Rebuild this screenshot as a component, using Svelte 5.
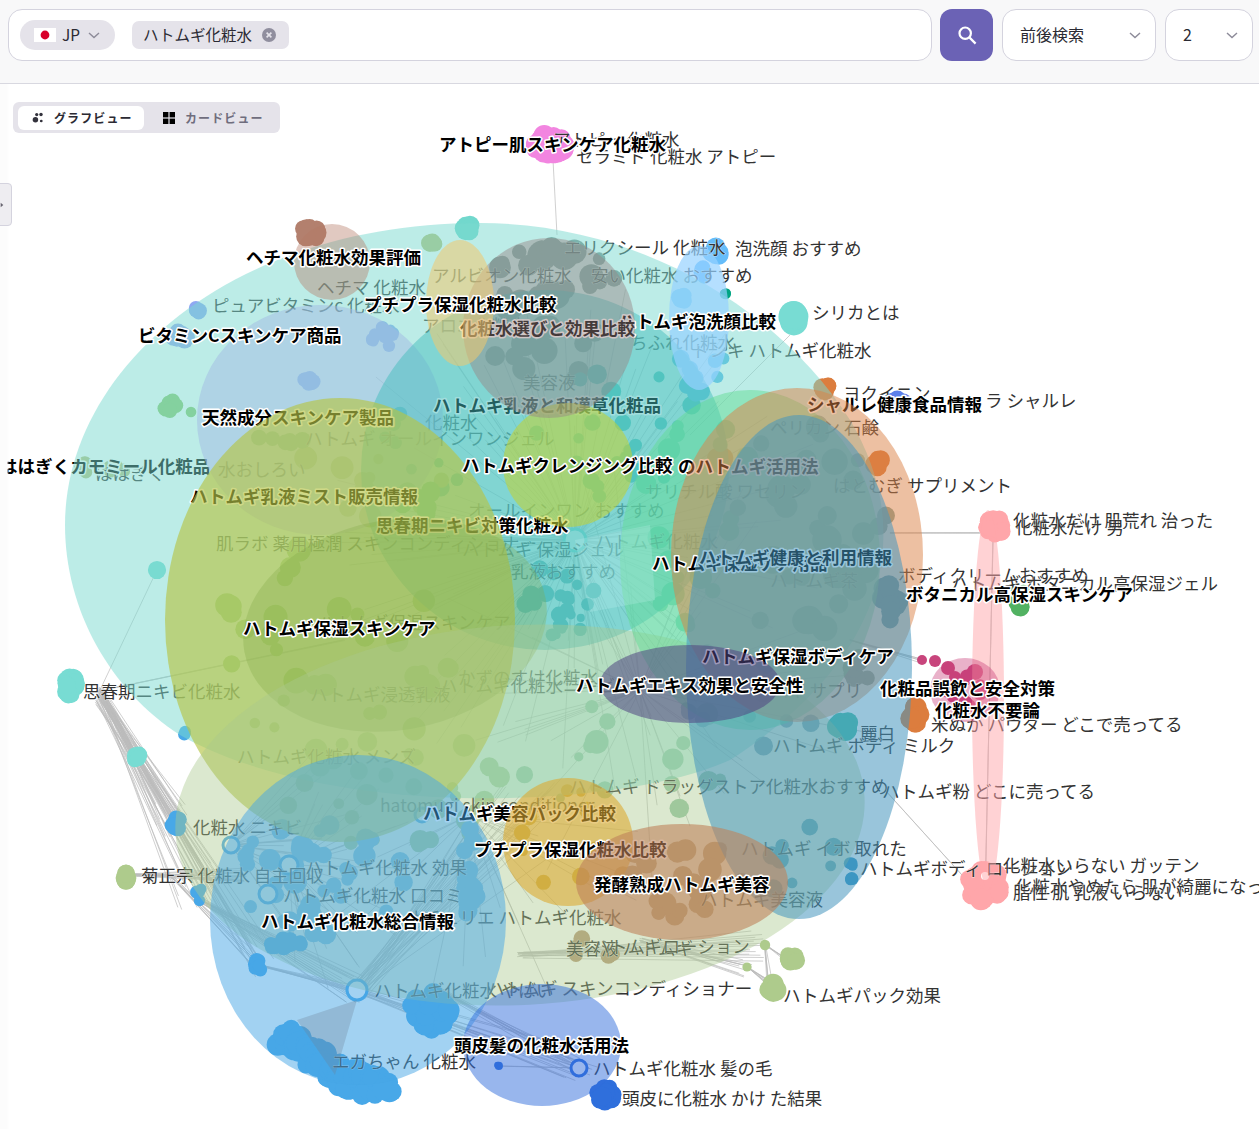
<script>
	// tiny seeded random so the graph is the same on every load
	let seed = 42;
	function rnd() {
		seed = (seed + 0x6d2b79f5) | 0;
		let t = Math.imul(seed ^ (seed >>> 15), 1 | seed);
		t = (t + Math.imul(t ^ (t >>> 7), 61 | t)) ^ t;
		return ((t ^ (t >>> 14)) >>> 0) / 4294967296;
	}

	const nodes = [];
	function blob(cx, cy, rx, ry, n, r, fill) {
		for (let i = 0; i < n; i++) {
			const a = rnd() * Math.PI * 2;
			const d = Math.sqrt(rnd());
			nodes.push({
				x: cx + Math.cos(a) * d * Math.max(rx - r, 0),
				y: cy + Math.sin(a) * d * Math.max(ry - r, 0),
				r: r * (0.85 + rnd() * 0.25),
				fill
			});
		}
	}
	function scatter(cx, cy, rx, ry, n, rMin, rMax, fill) {
		for (let i = 0; i < n; i++) {
			const a = rnd() * Math.PI * 2;
			const d = Math.sqrt(rnd());
			nodes.push({
				x: cx + Math.cos(a) * d * rx,
				y: cy + Math.sin(a) * d * ry,
				r: rMin + rnd() * (rMax - rMin),
				fill
			});
		}
	}

	const BLUE = '#48a8e8';
	const ROYAL = '#2f6fdc';
	const TEAL = '#78dcd3';
	const PINK = '#ffa6aa';
	const ORANGE = '#dc7d3e';
	const SAGE = '#aecb8c';

	blob(550, 145, 27, 20, 44, 10, '#f285e0');
	blob(312, 232, 19, 17, 14, 9, '#b3806e');
	blob(468, 228, 13, 14, 8, 9, '#72d8cd');
	blob(432, 245, 12, 11, 6, 8, '#b8c078');
	blob(717, 252, 17, 14, 10, 9, '#66bdfa');
	blob(682, 298, 12, 13, 7, 8, '#66bdfa');
	blob(703, 275, 10, 16, 5, 7, '#66bdfa');
	blob(725, 293, 7, 6, 3, 5, '#00a583');
	blob(794, 318, 15, 18, 7, 13, TEAL);
	blob(826, 388, 13, 13, 5, 9, ORANGE);
	blob(878, 463, 14, 14, 7, 9, ORANGE);
	blob(721, 462, 15, 15, 6, 10, ORANGE);
	blob(915, 715, 15, 19, 12, 10, ORANGE);
	blob(897, 402, 17, 14, 9, 8, '#5c7fea');
	blob(198, 310, 11, 11, 5, 7, '#8fa8f2');
	blob(177, 336, 22, 13, 9, 8, '#9aa8ee');
	blob(385, 338, 22, 20, 12, 6, '#8fa8f2');
	blob(308, 382, 12, 11, 6, 7, '#8fa8f2');
	blob(170, 405, 14, 14, 8, 7, '#8ec86e');
	blob(191, 412, 5, 5, 1, 5, '#8ec86e');
	blob(84, 467, 11, 13, 6, 7, '#b8c080');
	blob(117, 469, 16, 11, 7, 7, '#b8c080');
	blob(157, 570, 9, 9, 1, 9, TEAL);
	blob(70, 684, 16, 20, 18, 9, TEAL);
	blob(137, 758, 11, 14, 7, 8, TEAL);
	blob(176, 824, 13, 14, 10, 8, BLUE);
	blob(199, 893, 9, 14, 6, 6, BLUE);
	blob(260, 965, 13, 13, 7, 7, BLUE);
	blob(185, 733, 7, 8, 3, 6, BLUE);
	blob(126, 877, 10, 15, 6, 10, SAGE);
	blob(772, 990, 14, 16, 10, 10, SAGE);
	blob(790, 960, 15, 15, 9, 9, SAGE);
	blob(765, 945, 5, 5, 1, 5, SAGE);
	blob(747, 967, 5, 5, 1, 5, SAGE);
	blob(994, 527, 17, 21, 20, 9, PINK);
	blob(985, 885, 28, 25, 34, 10, PINK);
	blob(1020, 602, 13, 14, 10, 8, '#52b262');
	blob(1022, 590, 13, 6, 3, 5, '#52b262');
	for (const [x, y, r] of [[922, 660, 5], [935, 661, 6], [948, 668, 7], [955, 677, 6], [965, 680, 6], [975, 672, 8], [980, 692, 8], [990, 690, 6]]) {
		nodes.push({ x, y, r, fill: '#c8457c' });
	}
	// blue arc at the bottom
	for (let i = 0; i < 110; i++) {
		const t = i / 109;
		nodes.push({
			x: 288 + t * 96 + (rnd() - 0.5) * 24,
			y: 1036 + Math.sin(t * 1.5) * 50 + (rnd() - 0.5) * 22,
			r: 8 + rnd() * 4,
			fill: BLUE
		});
	}
	blob(430, 1010, 30, 30, 46, 10, BLUE);
	blob(282, 945, 30, 14, 10, 8, BLUE);
	blob(605, 1095, 18, 18, 18, 9, ROYAL);
	blob(498, 1066, 5, 6, 2, 4, ROYAL);
	blob(851, 871, 9, 16, 7, 6, '#3498c8');

	// nodes under the larger hulls
	scatter(550, 310, 70, 80, 34, 6, 15, '#7d8d8a');
	blob(545, 250, 20, 14, 6, 10, '#7d8d8a');
	scatter(420, 450, 50, 50, 10, 4, 10, '#2cb8a8');
	scatter(610, 430, 90, 70, 22, 5, 10, '#3fbdb0');
	scatter(700, 380, 30, 40, 12, 5, 9, '#55b8e8');
	scatter(560, 600, 35, 40, 24, 4, 9, '#4ba6a6');
	scatter(340, 640, 120, 120, 30, 5, 13, '#a0c878');
	scatter(360, 470, 90, 50, 12, 5, 12, '#b0c878');
	blob(280, 440, 35, 12, 6, 8, '#78c070');
	blob(420, 500, 30, 25, 8, 9, '#66c068');
	scatter(380, 790, 130, 60, 30, 5, 12, '#a8cc98');
	scatter(320, 880, 90, 60, 40, 6, 12, '#78c0ea');
	blob(470, 880, 16, 60, 18, 9, '#78c0ea');
	scatter(630, 760, 120, 60, 16, 4, 12, '#98c8a8');
	scatter(700, 520, 60, 120, 18, 6, 12, '#70d4a8');
	scatter(800, 530, 90, 110, 36, 7, 15, '#86a69c');
	blob(890, 600, 18, 30, 16, 10, '#458ca8');
	blob(860, 670, 18, 22, 10, 8, '#8a968c');
	blob(845, 725, 20, 15, 12, 10, '#45c0a8');
	scatter(760, 700, 80, 70, 12, 5, 10, '#7ca4b8');
	scatter(800, 860, 40, 40, 8, 5, 10, '#5aa4bc');
	scatter(680, 880, 70, 40, 26, 6, 12, '#bc9878');
	scatter(570, 840, 50, 50, 10, 4, 9, '#d0a838');
	scatter(590, 950, 30, 12, 5, 5, 10, '#b89878');
	scatter(965, 690, 25, 20, 8, 5, 8, '#c8457c');

	// edges as gray bundles: from, to, spread, how many
	const bundles = [
		[553, 160, 557, 235, 0, 1],
		[100, 690, 172, 820, 36, 22],
		[100, 690, 137, 758, 8, 8],
		[100, 700, 200, 885, 50, 22],
		[100, 695, 255, 960, 40, 14],
		[100, 690, 157, 570, 0, 1],
		[95, 692, 345, 640, 3, 3],
		[135, 875, 240, 875, 14, 12],
		[170, 875, 255, 960, 14, 8],
		[200, 900, 355, 990, 30, 16],
		[258, 965, 357, 990, 8, 8],
		[790, 335, 690, 435, 0, 1],
		[993, 540, 985, 870, 2, 3],
		[885, 790, 962, 875, 0, 2],
		[890, 533, 980, 533, 1, 3],
		[640, 940, 747, 967, 22, 10],
		[747, 967, 770, 985, 6, 8],
		[765, 945, 790, 960, 8, 5],
		[765, 945, 770, 985, 8, 5],
		[520, 955, 750, 945, 34, 14],
		[357, 990, 580, 1068, 40, 14],
		[357, 990, 510, 820, 90, 30],
		[440, 990, 580, 1068, 24, 10],
		[580, 1068, 498, 1066, 1, 2],
		[850, 640, 925, 662, 5, 5]
	];
	let edgePath = '';
	for (const [a, b, c, d, s, n] of bundles) {
		for (let i = 0; i < n; i++) {
			const j = () => (rnd() - 0.5) * s;
			edgePath += `M${(a + j() * 0.2).toFixed(1)} ${(b + j() * 0.2).toFixed(1)}L${(c + j()).toFixed(1)} ${(d + j()).toFixed(1)}`;
		}
	}
	// long edges fanning out of the hubs, each within its own arc
	let fanPath = '';
	for (const [hx, hy, n, len, from, to] of [
		[575, 540, 110, 260, 0, 360],
		[231, 845, 22, 140, -50, 60],
		[289, 865, 26, 130, -70, 90],
		[470, 815, 20, 190, 0, 180],
		[640, 690, 40, 230, 0, 360]
	]) {
		for (let i = 0; i < n; i++) {
			const a = ((from + rnd() * (to - from)) * Math.PI) / 180;
			const l = len * (0.35 + rnd() * 0.65);
			fanPath += `M${hx} ${hy}L${(hx + Math.cos(a) * l).toFixed(1)} ${(hy + Math.sin(a) * l).toFixed(1)}`;
		}
	}

	const rings = [
		[357, 990, 10, BLUE],
		[579, 1068, 8, ROYAL],
		[231, 845, 8, BLUE],
		[268, 894, 9, BLUE],
		[289, 865, 9, BLUE],
		[575, 540, 11, TEAL],
		[422, 815, 7, BLUE]
	];

	const thin = [
		['アトピー 化粧水', 553, 139],
		['セラミド 化粧水 アトピー', 576, 156],
		['エリクシール 化粧水', 564, 247],
		['泡洗顔 おすすめ', 735, 248],
		['アルビオン化粧水', 432, 275],
		['安い化粧水 おすすめ', 591, 275],
		['シリカとは', 812, 312],
		['ドンキ ハトムギ化粧水', 692, 350],
		['ちふれ化粧水', 630, 342],
		['アロエ化粧水', 422, 325],
		['ヘチマ 化粧水', 317, 287],
		['ピュアビタミンc 化粧水', 212, 305],
		['美容液', 523, 382],
		['化粧水', 425, 422],
		['ハトムギ オールインワンジェル', 305, 438],
		['ヨクイニン', 843, 393],
		['ラ シャルレ', 985, 400],
		['ペリカン 石鹸', 770, 427],
		['ははぎく', 95, 473],
		['水おしろい', 218, 469],
		['肌ラボ 薬用極潤 スキンコンディショナー', 216, 543],
		['ハトムギ 保湿ジェル', 462, 549],
		['乳液おすすめ', 511, 571],
		['オールインワン おすすめ', 468, 510],
		['ハトムギ保湿スキンケア', 318, 622],
		['サリチル酸 ワセリン', 645, 491],
		['はとむぎ サプリメント', 833, 485],
		['ハトムギ化粧水', 595, 541],
		['ハトムギ茶', 770, 580],
		['ボディクリームおすすめ', 898, 575],
		['ハトムギ ボタニカル高保湿ジェル', 951, 583],
		['化粧水だけ 肌荒れ 治った', 1013, 520],
		['化粧水だけ 男', 1015, 527],
		['思春期ニキビ化粧水', 83, 691],
		['ハトムギ浸透乳液', 310, 694],
		['かずのすけ化粧水', 458, 677],
		['ハトムギ化粧水ニキビ', 440, 685],
		['ハトムギ サプリ', 735, 690],
		['麗白', 860, 733],
		['ハトムギ ボディ ミルク', 773, 745],
		['米ぬか パウダー どこで売ってる', 931, 724],
		['ハトムギ化粧水 メンズ', 237, 756],
		['ハトムギ ドラッグストア化粧水おすすめ', 569, 786],
		['ハトムギ粉 どこに売ってる', 882, 791],
		['hatomugi skin conditioner', 380, 805],
		['化粧水 ニキビ', 193, 827],
		['ハトムギ イボ 取れた', 741, 848],
		['ハトムギボディ ローション', 860, 868],
		['化粧水いらない ガッテン', 1003, 865],
		['化粧水やめたら 肌が綺麗になった', 1015, 886],
		['脂性 肌 乳液 いらない', 1013, 892],
		['菊正宗 化粧水 自主回収', 141, 875],
		['ハトムギ化粧水 効果', 305, 867],
		['ハトムギ化粧水 口コミ', 283, 895],
		['ハトムギ美容液', 700, 899],
		['ナチュリエ ハトムギ化粧水', 407, 917],
		['美容液 ハトムギ', 566, 948],
		['ハトムギローション', 592, 946],
		['ハトムギ化粧水 やばい', 374, 990],
		['ハトムギ スキンコンディショナー', 487, 988],
		['ハトムギパック効果', 783, 995],
		['エガちゃん 化粧水', 332, 1061],
		['ハトムギ化粧水 髪の毛', 593, 1068],
		['頭皮に化粧水 かけ た結果', 622, 1098]
	];

	// painted in order: a community's label sits under the hulls painted after it
	const layers = [
		{ t: 'ははぎくカモミール化粧品', x: 0, y: 466 },
		{ d: 'M65 525C65 370 230 223 480 223C640 223 780 310 850 420C910 520 900 650 730 760C620 810 330 820 180 735C110 690 65 610 65 525Z', c: 'rgba(122,217,208,.5)' },
		{ e: [320, 420, 123, 115], c: 'rgba(161,186,227,.5)' },
		{ t: 'ハトムギ乳液と和漢草化粧品', x: 433, y: 405 },
		{ e: [545, 470, 184, 180], c: 'rgba(70,190,190,.5)' },
		{ t: '天然成分スキンケア製品', x: 202, y: 417 },
		{ t: 'ハトムギ乳液ミスト販売情報', x: 190, y: 496 },
		{ t: '思春期ニキビ対策化粧水', x: 376, y: 525 },
		{ e: [340, 620, 175, 222], c: 'rgba(181,197,71,.65)' },
		{ e: [395, 625, 153, 105, -10], c: 'rgba(130,170,70,.3)' },
		{ e: [520, 815, 345, 190, -3], c: 'rgba(170,200,140,.42)' },
		{ e: [750, 560, 130, 170], c: 'rgba(100,220,150,.5)' },
		{ e: [568, 465, 65, 62], c: 'rgba(190,210,60,.6)' },
		{ e: [699, 318, 30, 72], c: 'rgba(150,210,255,.7)' },
		{ t: 'ハトムギ泡洗顔比較', x: 618, y: 321 },
		{ t: '化粧水選びと効果比較', x: 460, y: 328 },
		{ e: [549, 328, 86, 90], c: 'rgba(150,130,130,.45)' },
		{ e: [460, 303, 34, 63], c: 'rgba(240,200,110,.55)' },
		{ e: [332, 262, 38, 38], c: 'rgba(180,120,100,.4)' },
		{ t: 'シャルレ健康食品情報', x: 807, y: 404 },
		{ t: 'のハトムギ活用法', x: 678, y: 466 },
		{ e: [797, 555, 126, 167], c: 'rgba(220,130,70,.5)' },
		{ t: 'ハトムギ保湿ケア用品', x: 652, y: 563 },
		{ t: 'ハトムギ健康と利用情報', x: 699, y: 557 },
		{ e: [799, 667, 113, 252], c: 'rgba(70,150,190,.55)' },
		{ t: 'ハトムギ保湿ボディケア', x: 702, y: 656 },
		{ e: [690, 684, 90, 39], c: 'rgba(80,70,130,.55)' },
		{ t: 'ハトムギ美容パック比較', x: 423, y: 813 },
		{ e: [358, 920, 148, 165], c: 'rgba(70,165,230,.5)' },
		{ e: [568, 842, 65, 64], c: 'rgba(220,170,50,.6)' },
		{ t: 'プチプラ保湿化粧水比較', x: 474, y: 849 },
		{ e: [682, 882, 106, 58], c: 'rgba(190,130,90,.6)' },
		{ e: [542, 1045, 79, 61], c: 'rgba(50,110,220,.5)' },
		{ e: [988, 700, 16, 190], c: 'rgba(255,166,170,.5)' },
		{ e: [965, 690, 35, 32], c: 'rgba(200,60,120,.4)' },
		{ d: 'M357 1000L297 1020L335 1075Z', c: 'rgba(110,130,150,.3)' },
		{ d: 'M575 540L650 525L655 600L590 612Z', c: 'rgba(205,245,245,.22)' },
		{ t: 'アトピー肌スキンケア化粧水', x: 439, y: 144 },
		{ t: 'ヘチマ化粧水効果評価', x: 246, y: 257 },
		{ t: 'プチプラ保湿化粧水比較', x: 364, y: 304 },
		{ t: 'ビタミンCスキンケア商品', x: 138, y: 335 },
		{ t: 'ハトムギクレンジング比較', x: 462, y: 465 },
		{ t: 'ボタニカル高保湿スキンケア', x: 906, y: 594 },
		{ t: 'ハトムギ保湿スキンケア', x: 243, y: 628 },
		{ t: 'ハトムギエキス効果と安全性', x: 576, y: 685 },
		{ t: '化粧品誤飲と安全対策', x: 880, y: 688 },
		{ t: '化粧水不要論', x: 935, y: 710 },
		{ t: '発酵熟成ハトムギ美容', x: 594, y: 884 },
		{ t: 'ハトムギ化粧水総合情報', x: 261, y: 921 },
		{ t: '頭皮髪の化粧水活用法', x: 454, y: 1045 }
	];
</script>

<main>
	<header class="bar">
		<div class="search">
			<button class="country">
				<svg class="flag" viewBox="0 0 22 14" aria-hidden="true">
					<rect width="22" height="14" fill="#fff" />
					<circle cx="11" cy="7" r="4.4" fill="#d8002a" />
				</svg>
				<span>JP</span>
				<svg class="chev" viewBox="0 0 12 7" aria-hidden="true"><path d="M1 1l5 4.6L11 1" /></svg>
			</button>
			<span class="chip">
				<span>ハトムギ化粧水</span>
				<svg class="clear" viewBox="0 0 14 14" aria-hidden="true">
					<circle cx="7" cy="7" r="7" fill="#908e9e" />
					<path d="M4.6 4.6l4.8 4.8M9.4 4.6l-4.8 4.8" stroke="#e5e3ea" stroke-width="1.6" fill="none" />
				</svg>
			</span>
		</div>
		<button class="go" aria-label="検索">
			<svg viewBox="0 0 20 20" aria-hidden="true">
				<circle cx="8.2" cy="8.2" r="5.7" />
				<path d="M12.6 12.6l6 6" />
			</svg>
		</button>
		<button class="select wide">
			<span>前後検索</span>
			<svg class="chev" viewBox="0 0 12 7" aria-hidden="true"><path d="M1 1l5 4.6L11 1" /></svg>
		</button>
		<button class="select narrow">
			<span>2</span>
			<svg class="chev" viewBox="0 0 12 7" aria-hidden="true"><path d="M1 1l5 4.6L11 1" /></svg>
		</button>
	</header>

	<section class="stage">
		<svg class="graph" viewBox="0 84 1259 1045">
			<path d={edgePath} class="edges" />
			<path d={fanPath} class="edges" />
			{#each nodes as n}
				<circle cx={n.x} cy={n.y} r={n.r} fill={n.fill} />
			{/each}
			{#each rings as [x, y, r, c]}
				<circle cx={x} cy={y} {r} fill="#fff" stroke={c} stroke-width="3" />
			{/each}
			<circle cx="985" cy="876" r="4" fill="#fff" />
			{#each thin as [label, x, y]}
				<text {x} {y} dy="-1" class="thin">{label}</text>
			{/each}
			{#each layers as l}
				{#if l.t}
					<text x={l.x} y={l.y} dy="-1" class="bold">{l.t}</text>
				{:else if l.d}
					<path d={l.d} fill={l.c} />
				{:else}
					<ellipse
						cx={l.e[0]}
						cy={l.e[1]}
						rx={l.e[2]}
						ry={l.e[3]}
						transform={l.e[4] ? `rotate(${l.e[4]} ${l.e[0]} ${l.e[1]})` : undefined}
						fill={l.c}
					/>
				{/if}
			{/each}
		</svg>

		<div class="edge-fade"></div>

		<div class="tabs">
			<button class="tab active">
				<svg viewBox="0 0 14 14" aria-hidden="true">
					<circle cx="4" cy="9" r="3.2" />
					<circle cx="5.5" cy="3" r="1.9" />
					<circle cx="10.5" cy="3" r="2" />
					<circle cx="10.8" cy="10.5" r="1.6" />
				</svg>
				グラフビュー
			</button>
			<button class="tab">
				<svg viewBox="0 0 12 12" aria-hidden="true">
					<rect width="5.4" height="5.4" />
					<rect x="6.6" width="5.4" height="5.4" />
					<rect y="6.6" width="5.4" height="5.4" />
					<rect x="6.6" y="6.6" width="5.4" height="5.4" />
				</svg>
				カードビュー
			</button>
		</div>

		<button class="handle" aria-label="開く">
			<svg viewBox="0 0 6 8" aria-hidden="true"><path d="M1 0.5L5 4L1 7.5Z" /></svg>
		</button>
	</section>
</main>

<style>
	:global(body) {
		margin: 0;
		overflow: hidden;
		font-family: 'Noto Sans CJK JP', 'Noto Sans', sans-serif;
		color: #2b2a33;
	}

	main {
		width: 1259px;
		height: 1129px;
		display: flex;
		flex-direction: column;
		background: #fff;
		overflow: hidden;
	}

	button {
		font: inherit;
		color: inherit;
		border: 0;
		background: none;
		padding: 0;
	}

	.bar {
		box-sizing: border-box;
		flex: none;
		height: 84px;
		display: flex;
		gap: 8px;
		padding: 9px 6px 22px 8px;
		background: #f8f8f9;
		border-bottom: 1px solid #d8d8e0;
	}

	.search,
	.select {
		box-sizing: border-box;
		height: 52px;
		background: #fff;
		border: 1px solid #d4d3de;
		border-radius: 14px;
	}

	.search {
		flex: 1;
		display: flex;
		align-items: center;
		gap: 17px;
		padding-left: 11px;
	}

	.country {
		width: 95px;
		height: 30px;
		display: flex;
		align-items: center;
		padding-left: 14px;
		box-sizing: border-box;
		background: #e5e3ea;
		border-radius: 15px;
		font-size: 15.4px;
	}

	.country span,
	.chip span,
	.select span {
		position: relative;
		top: -1px;
	}

	.flag {
		width: 22px;
		height: 14px;
		margin-right: 6px;
	}

	.chev {
		width: 12px;
		height: 7px;
		fill: none;
		stroke: #8d8b99;
		stroke-width: 1.4;
	}

	.country .chev {
		margin-left: 8px;
	}

	.chip {
		height: 28px;
		display: flex;
		align-items: center;
		gap: 10px;
		padding: 0 13px 0 11px;
		background: #e5e3ea;
		border-radius: 7px;
		font-size: 15.5px;
	}

	.clear {
		width: 14px;
		height: 14px;
	}

	.go {
		width: 53px;
		height: 52px;
		margin-right: 1px;
		display: flex;
		align-items: center;
		justify-content: center;
		background: #6b62b5;
		border-radius: 12px;
	}

	.go svg {
		width: 20px;
		height: 20px;
		fill: none;
		stroke: #fff;
		stroke-width: 2.2;
	}

	.select {
		display: flex;
		align-items: center;
		justify-content: space-between;
		padding: 0 14px 0 17px;
		font-size: 16px;
	}

	.wide {
		width: 154px;
	}

	.narrow {
		width: 88px;
		margin-left: 1px;
	}

	.stage {
		position: relative;
		flex: 1;
		overflow: hidden;
	}

	.graph {
		display: block;
		width: 1259px;
		height: 1045px;
	}

	.edges {
		fill: none;
		stroke: #bcbcbc;
		stroke-width: 0.7;
	}

	text {
		font-size: 17.5px;
		dominant-baseline: central;
		font-family: 'Noto Sans CJK JP', 'Noto Sans', sans-serif;
	}

	.thin {
		fill: #333;
		stroke: #fff;
		stroke-width: 1px;
		stroke-opacity: 0.6;
		paint-order: stroke;
	}

	.bold {
		fill: #000;
		font-weight: 700;
		stroke: #fff;
		stroke-width: 3px;
		stroke-linejoin: round;
		paint-order: stroke;
	}

	.edge-fade {
		position: absolute;
		left: 0;
		top: 0;
		bottom: 0;
		width: 9px;
		background: linear-gradient(to right, #fcfcfc 75%, rgba(255, 255, 255, 0));
	}

	.tabs {
		position: absolute;
		left: 13px;
		top: 18px;
		box-sizing: border-box;
		width: 267px;
		height: 31px;
		display: flex;
		align-items: center;
		padding: 0 5px;
		gap: 5px;
		background: #e5e3ea;
		border-radius: 6px;
	}

	.tab {
		box-sizing: border-box;
		height: 24px;
		width: 126px;
		display: flex;
		align-items: center;
		gap: 10px;
		padding-left: 14px;
		font-size: 12px;
		font-weight: 700;
		letter-spacing: 1.1px;
		color: #6f6d7d;
		border-radius: 6px;
	}

	.tab.active {
		background: #fff;
		color: #2b2a33;
	}

	.tab svg {
		width: 12px;
		height: 12px;
		fill: #000;
	}

	.tab.active svg {
		fill: #33323c;
	}

	.handle {
		position: absolute;
		left: -1px;
		top: 99px;
		box-sizing: border-box;
		width: 13px;
		height: 43px;
		display: flex;
		align-items: center;
		background: #eeedf1;
		border: 1px solid #d4d3de;
		border-radius: 0 4px 4px 0;
	}

	.handle svg {
		width: 4px;
		height: 6px;
		fill: #66646f;
	}
</style>
